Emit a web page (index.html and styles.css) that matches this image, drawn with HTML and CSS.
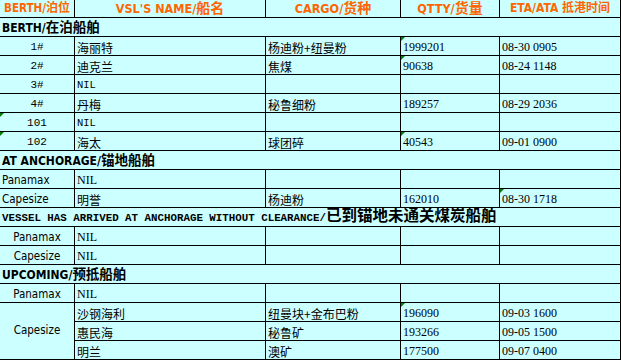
FILE: index.html
```html
<!DOCTYPE html>
<html>
<head>
<meta charset="utf-8">
<link rel="stylesheet" href="styles.css">
</head>
<body>
<table class="sheet">
  <colgroup><col class="c1"><col class="c2"><col class="c3"><col class="c4"><col class="c5"></colgroup>
  <thead>
    <tr class="hdr">
      <th class="first"><span class="lat">BERTH/</span><span class="hz">泊位</span></th>
      <th><span class="lat">VSL'S NAME/</span><span class="hz">船名</span></th>
      <th><span class="lat">CARGO/</span><span class="hz">货种</span></th>
      <th><span class="lat">QTTY/</span><span class="hz">货量</span></th>
      <th class="last"><span class="lat">ETA/ATA </span><span class="hz">抵港时间</span></th>
    </tr>
  </thead>
  <tbody>
    <tr class="sec"><td colspan="5"><span class="lat">BERTH/</span><span class="hz">在泊船舶</span></td></tr>
    <tr><td class="no">1#</td><td class="cn">海丽特</td><td class="cn">杨迪粉+纽曼粉</td><td class="num tri">1999201</td><td class="num">08-30 0905</td></tr>
    <tr><td class="no">2#</td><td class="cn">迪克兰</td><td class="cn">焦煤</td><td class="num tri">90638</td><td class="num">08-24 1148</td></tr>
    <tr><td class="no">3#</td><td class="nil">NIL</td><td></td><td></td><td></td></tr>
    <tr><td class="no">4#</td><td class="cn">丹梅</td><td class="cn">秘鲁细粉</td><td class="num">189257</td><td class="num">08-29 2036</td></tr>
    <tr><td class="no tri">101</td><td class="nil">NIL</td><td></td><td></td><td></td></tr>
    <tr><td class="no tri">102</td><td class="cn">海太</td><td class="cn">球团碎</td><td class="num tri">40543</td><td class="num">09-01 0900</td></tr>
    <tr class="sec"><td colspan="5"><span class="lat">AT ANCHORAGE/</span><span class="hz">锚地船舶</span></td></tr>
    <tr><td class="size">Panamax</td><td class="nil2">NIL</td><td></td><td></td><td></td></tr>
    <tr><td class="size">Capesize</td><td class="cn">明誉</td><td class="cn">杨迪粉</td><td class="num">162010</td><td class="num tri">08-30 1718</td></tr>
    <tr class="sec"><td colspan="5"><span class="mono">VESSEL HAS ARRIVED AT ANCHORAGE WITHOUT CLEARANCE/</span><span class="hz big">已到锚地未通关煤炭船舶</span></td></tr>
    <tr><td class="size ctr">Panamax</td><td class="nil2">NIL</td><td></td><td></td><td></td></tr>
    <tr><td class="size ctr">Capesize</td><td class="nil2">NIL</td><td></td><td></td><td></td></tr>
    <tr class="sec"><td colspan="5"><span class="lat">UPCOMING/</span><span class="hz">预抵船舶</span></td></tr>
    <tr><td class="size ctr">Panamax</td><td class="nil2">NIL</td><td></td><td></td><td></td></tr>
    <tr><td class="size ctr mid" rowspan="3">Capesize</td><td class="cn">沙钢海利</td><td class="cn">纽曼块+金布巴粉</td><td class="num tri">196090</td><td class="num">09-03 1600</td></tr>
    <tr><td class="cn">惠民海</td><td class="cn">秘鲁矿</td><td class="num">193266</td><td class="num">09-05 1500</td></tr>
    <tr><td class="cn">明兰</td><td class="cn">澳矿</td><td class="num">177500</td><td class="num">09-07 0400</td></tr>
  </tbody>
</table>
</body>
</html>
```

FILE: styles.css
```css
html, body {
  margin: 0;
  padding: 0;
  background: #ffffff;
}

.sheet {
  border-collapse: separate;
  border-spacing: 0;
  table-layout: fixed;
  width: 621px;
  background: #ccffff;
  color: #000;
  font-family: "Noto Sans CJK SC", sans-serif;
  font-size: 12px;
}

.c1 { width: 75px; }
.c2 { width: 191px; }
.c3 { width: 135px; }
.c4 { width: 99px; }
.c5 { width: 121px; }

.sheet th,
.sheet td {
  box-sizing: border-box;
  height: 19px;
  padding: 0 2px 1px 2px;
  border-right: 1px solid #000;
  border-bottom: 1px solid #000;
  vertical-align: bottom;
  line-height: 13px;
  white-space: nowrap;
  text-align: left;
  font-weight: normal;
  position: relative;
}

.hdr th {
  height: 18px;
  text-align: center;
  color: #ff6600;
  font-weight: bold;
  padding: 0 0 2px 0;
}

.lat {
  font-family: "DejaVu Sans Condensed", "DejaVu Sans", sans-serif;
  font-stretch: condensed;
  font-weight: bold;
  font-size: 12px;
}

.hz {
  font-family: "Noto Sans CJK SC", sans-serif;
  font-weight: bold;
  font-size: 13px;
}

.hdr .lat {
  font-size: 12.5px;
}

.hdr .hz {
  font-size: 14px;
}

.hdr .first .lat {
  font-size: 11.5px;
}

.hdr .first .hz,
.hdr .last .hz {
  font-size: 12px;
}

.hdr .last .lat {
  font-size: 12px;
}

.sec .hz {
  font-size: 13.5px;
}

.mono {
  font-family: "Liberation Mono", monospace;
  font-weight: bold;
  font-size: 10.8px;
}

.sec .big {
  font-size: 15.5px;
}

.no {
  font-family: "Liberation Mono", monospace;
  font-size: 11px;
}
.sheet td.no { text-align: center; }

.cn {
  font-family: "Noto Sans CJK SC", sans-serif;
  font-size: 12px;
}

.nil {
  font-family: "Liberation Mono", monospace;
  font-weight: bold;
  font-size: 10.5px;
}

.nil2 {
  font-family: "Liberation Serif", serif;
  font-size: 12px;
}

.num {
  font-family: "Liberation Serif", serif;
  font-size: 12px;
}

.size {
  font-family: "DejaVu Sans Condensed", "DejaVu Sans", sans-serif;
  font-stretch: condensed;
  font-size: 11.5px;
}
.sheet td.ctr { text-align: center; }
.sheet td.mid { vertical-align: middle; }

.tri::before {
  content: "";
  position: absolute;
  left: 0;
  top: 0;
  width: 0;
  height: 0;
  border-top: 4px solid #008000;
  border-right: 4px solid transparent;
}
```
